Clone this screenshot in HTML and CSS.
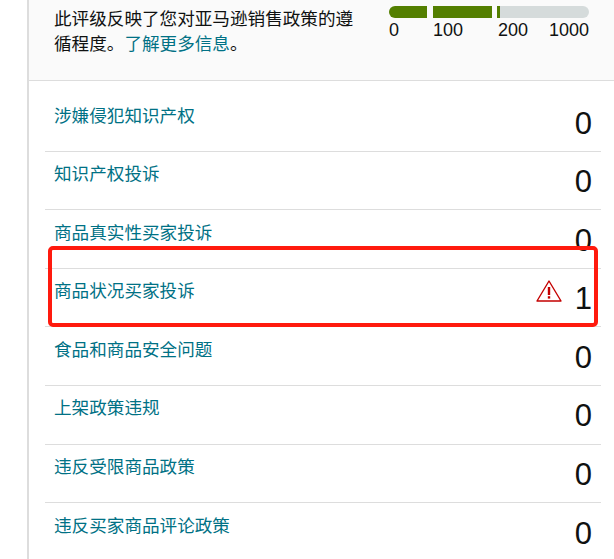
FILE: index.html
```html
<!DOCTYPE html>
<html lang="zh-CN">
<head>
    <meta charset="UTF-8">
    <meta name="viewport" content="width=device-width, initial-scale=1.0">
    <title>账户状况</title>
    <link rel="stylesheet" href="styles.css">
</head>
<body>
    <div class="card">
        <div class="summary">
            <p class="summary-text">此评级反映了您对亚马逊销售政策的遵循程度。<a class="link" href="#">了解更多信息</a>。</p>
            <div class="rating">
                <div class="bar">
                    <span class="seg seg-low"></span>
                    <span class="seg seg-mid"></span>
                    <span class="seg seg-high"><span class="seg-fill"></span></span>
                </div>
                <div class="scale">
                    <span>0</span>
                    <span>100</span>
                    <span>200</span>
                    <span>1000</span>
                </div>
            </div>
        </div>

        <ul class="list">
            <li class="row"><a class="link" href="#">涉嫌侵犯知识产权</a><span class="count">0</span></li>
            <li class="row"><a class="link" href="#">知识产权投诉</a><span class="count">0</span></li>
            <li class="row"><a class="link" href="#">商品真实性买家投诉</a><span class="count">0</span></li>
            <li class="row">
                <a class="link" href="#">商品状况买家投诉</a>
                <svg class="alert" width="26" height="22" viewBox="0 0 26 22">
                    <path d="M13 1 L25 21 L1 21 Z" fill="none" stroke="#c40000" stroke-width="1.4" stroke-linejoin="round"/>
                    <rect x="11.8" y="7" width="2.4" height="8" fill="#c40000"/>
                    <rect x="11.8" y="16.2" width="2.4" height="2.4" fill="#c40000"/>
                </svg>
                <span class="count">1</span>
            </li>
            <li class="row"><a class="link" href="#">食品和商品安全问题</a><span class="count">0</span></li>
            <li class="row"><a class="link" href="#">上架政策违规</a><span class="count">0</span></li>
            <li class="row"><a class="link" href="#">违反受限商品政策</a><span class="count">0</span></li>
            <li class="row"><a class="link" href="#">违反买家商品评论政策</a><span class="count">0</span></li>
        </ul>
    </div>

    <!-- 红色标注框 -->
    <div class="highlight"></div>
</body>
</html>
```

FILE: styles.css
```css
* {
    margin: 0;
    padding: 0;
    box-sizing: border-box;
}

html, body {
    height: 100%;
    overflow: hidden;
}

body {
    position: relative;
    font-family: "Liberation Sans", "Noto Sans CJK SC", sans-serif;
    background: #fff;
    color: #0f1111;
    padding-left: 27px;
}

.card {
    height: 100%;
    border-left: 2px solid #ddd;
}

.summary {
    display: flex;
    justify-content: space-between;
    height: 81px;
    padding: 6px 25px 0 25px;
    background: #fafafa;
    border-bottom: 1px solid #ddd;
}

.summary-text {
    width: 300px;
    margin-top: 1px;
    font-size: 17.6px;
    line-height: 25px;
}

.link {
    color: #007185;
    text-decoration: none;
}

.rating {
    width: 200px;
}

.bar {
    display: flex;
    gap: 6px;
    height: 12px;
}

.seg {
    display: block;
    background: #537f00;
}

.seg-low {
    width: 38px;
    border-radius: 6px 0 0 6px;
}

.seg-mid {
    width: 59px;
}

.seg-high {
    flex: 1;
    margin-left: -1px;
    background: #d5dbdb;
    border-radius: 0 6px 6px 0;
}

.seg-fill {
    display: block;
    width: 3px;
    height: 100%;
    background: #537f00;
}

.scale {
    display: grid;
    grid-template-columns: 44px 65px 1fr auto;
    margin-top: 1px;
    font-size: 18px;
    line-height: 22px;
}

.list {
    list-style: none;
    margin: 12px 13px 0 16px;
}

.row {
    display: flex;
    align-items: flex-start;
    height: 58.6px;
    padding: 9.5px 9px 0 9px;
    border-bottom: 1px solid #ddd;
    font-size: 17.6px;
    line-height: 26px;
}

.row .link {
    flex: 1;
}

.alert {
    margin: 2px 13px 0 0;
}

.count {
    font-size: 31px;
    line-height: 36px;
    margin-top: 3px;
}

.highlight {
    position: absolute;
    left: 48px;
    top: 246px;
    width: 550px;
    height: 81px;
    border: 4px solid #ff1a0e;
    border-radius: 5px;
}
```
